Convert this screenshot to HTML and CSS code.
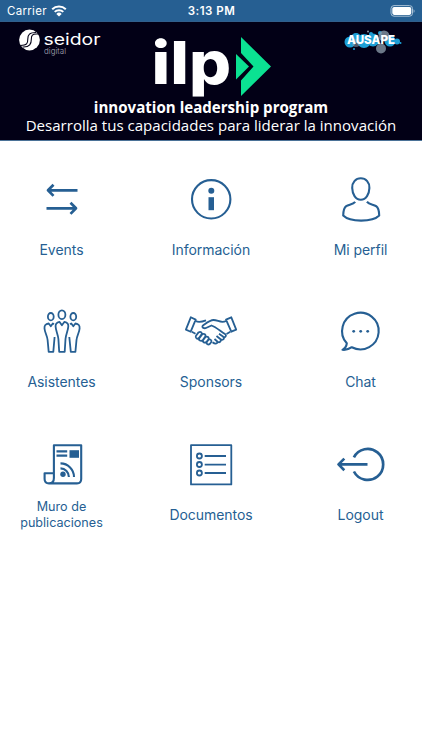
FILE: index.html
```
<!DOCTYPE html>
<html lang="es">
<head>
    <meta charset="UTF-8">
    <meta name="viewport" content="width=device-width, initial-scale=1.0">
    <title>Innovation Leadership Program</title>
    <link rel="stylesheet" href="styles.css">
</head>
<body>
    <div class="status-bar">
        <div class="carrier">
            <span>Carrier</span>
            <svg class="wifi" width="16" height="12" viewBox="0 0 16 12">
                <path d="M1.2 4.2a9.8 9.8 0 0 1 13.6 0M3.7 6.9a6.2 6.2 0 0 1 8.6 0" fill="none" stroke="#fff" stroke-width="2"/>
                <path d="M8 11.6L5.3 8.9a3.8 3.8 0 0 1 5.4 0z" fill="#fff"/>
            </svg>
        </div>
        <div class="time">3:13 PM</div>
        <div class="battery">
            <svg width="26" height="12" viewBox="0 0 26 12">
                <rect x="1" y=".6" width="21.5" height="10.6" rx="3" fill="none" stroke="#a9c1d6" stroke-width="1"/>
                <rect x="2.3" y="1.9" width="19" height="8" rx="1.8" fill="#fff"/>
                <path d="M23.6 4.2c1.3.4 1.3 3.2 0 3.6z" fill="#a9c1d6"/>
            </svg>
        </div>
    </div>

    <header class="banner">
        <div class="logos">
            <svg class="seidor" width="84" height="30" viewBox="0 0 84 30">
                <circle cx="10.5" cy="10" r="10.4" fill="#fff"/>
                <path d="M19 4C13 3.500 12.300 5.500 12.300 9.500S11 17.500 3.500 17M17 2.500C10.500 2.500 8.800 4.500 8.800 9S8 15.500 1.500 15.500" fill="none" stroke="#020016" stroke-width="1.1"/>
                <text x="24.500" y="14.500" font-size="16" textLength="57" lengthAdjust="spacingAndGlyphs">seidor</text>
                <text class="thin" x="25" y="24" font-size="8" textLength="22" lengthAdjust="spacingAndGlyphs">digital</text>
            </svg>
            <svg class="ilp" width="118" height="66" viewBox="0 0 118 66">
                <text x="-.5" y="47.500" font-size="59" textLength="79.500" lengthAdjust="spacingAndGlyphs">ilp</text>
                <path d="M89 1L119 30.500L89 60V44.500L101.500 30.500L89 17z" fill="#0be292"/>
                <path d="M84 18L97 30.500L84 43.500z" fill="#0be292"/>
            </svg>
            <svg class="ausape" width="58" height="27" viewBox="0 0 58 27">
                <g fill="#1d9fd6">
                    <circle cx="6" cy="12" r="5.500"/>
                    <circle cx="12" cy="8" r="5"/>
                    <circle cx="20" cy="11" r="7"/>
                    <circle cx="29" cy="10" r="6.500"/>
                    <circle cx="46" cy="11" r="5.500"/>
                    <circle cx="53" cy="11.500" r="3"/>
                    <circle cx="27" cy="4" r="2"/>
                    <circle cx="36" cy="3" r="2"/>
                    <circle cx="10" cy="19" r="1"/>
                    <circle cx="56.500" cy="13" r="1"/>
                </g>
                <g fill="#8796a5">
                    <circle cx="40" cy="6" r="5.500" opacity=".8"/>
                    <circle cx="37" cy="18.500" r="5" opacity=".8"/>
                    <circle cx="24" cy="1.500" r="1"/>
                    <circle cx="12" cy="13" r="4" opacity=".6"/>
                </g>
                <text x="3" y="14" font-size="12" textLength="48" lengthAdjust="spacingAndGlyphs">AUSAPE</text>
            </svg>
        </div>
        <h1>innovation leadership program</h1>
        <p>Desarrolla tus capacidades para liderar la innovación</p>
    </header>

    <main class="menu">
        <a class="item">
            <svg class="icon bold" viewBox="0 0 56 52">
                <path d="M43.500 17.300H14M19.500 11.700L14 17.300L19.500 22.900M12.500 35.300H42M36.500 29.700L42 35.300L36.500 40.900"/>
            </svg>
            <span>Events</span>
        </a>
        <a class="item">
            <svg class="icon" viewBox="0 0 56 52">
                <circle cx="28.200" cy="26.300" r="19.200"/>
                <circle class="solid" cx="28.300" cy="17.700" r="3"/>
                <path class="solid" d="M25.500 24.200h5.500v13h-5.500z"/>
            </svg>
            <span>Información</span>
        </a>
        <a class="item">
            <svg class="icon" viewBox="0.500 0 56 52">
                <path d="M28.300 5.300C33.500 5.300 37.200 9.500 36.900 15C36.700 21 33.700 26.800 28.300 26.800S19.900 21 19.700 15C19.400 9.500 23.100 5.300 28.300 5.300z"/>
                <path d="M22.700 28.800C20.500 31.500 16.500 31.500 13.700 33.200C11.500 34.800 10.800 38 10.700 42.500C14 45.800 21 47.600 28.600 47.600S43.500 45.800 46.700 42.500C46.600 38 46 34.800 43.700 33.200C40.500 31.500 36.700 31.500 34.400 28.800"/>
            </svg>
            <span>Mi perfil</span>
        </a>
        <a class="item">
            <svg class="icon fine" viewBox="0 0 56 52">
                <ellipse cx="27.900" cy="9.700" rx="3.500" ry="4.400"/>
                <ellipse cx="16.800" cy="11.700" rx="2.900" ry="3.700"/>
                <ellipse cx="39.300" cy="11.700" rx="2.900" ry="3.700"/>
                <path d="M25.400 16.800L27.900 20.300L30.500 16.800C33 17.300 34.600 18.500 34.300 21.500C34 26 31.800 29.500 31.500 34L30.700 46.800H25.200L24.400 34C24 29.500 21.800 26 21.600 21.500C21.400 18.500 23 17.300 25.400 16.800z"/>
                <path d="M20 19.300L18.800 18.500L16.800 21.200L14.700 18.500C11.500 19 10.200 20 10.500 23.500C10.800 27.500 13.300 31 13.600 35L14.700 46.800H19.300L20.600 32"/>
                <path d="M36 19.300L37.300 18.500L39.300 21.200L41.400 18.500C44.600 19 45.900 20 45.600 23.500C45.300 27.500 42.800 31 42.500 35L41.400 46.800H36.800L35.300 32"/>
            </svg>
            <span>Asistentes</span>
        </a>
        <a class="item">
            <svg class="icon fine" viewBox="0 0 56 52">
                <path d="M7.800 12.300L12.700 14.600L7.700 26.700L2.900 24.600zM48.300 12.300L53.200 24.600L48.300 26.700L43 14.600z"/>
                <path d="M12.700 16C16 17.800 19 16.800 23 15.300M43 16C38 18.500 35 15 30.500 15C27 15 25.500 16.500 19.700 20.800C18.500 22.500 21 24 23.500 22.800L28.500 20.500C33 22 37 25.800 42 29C44 30.500 42.500 33 40.300 31.700L36 28.800"/>
                <path d="M40.300 31.700C42 34 39.500 35.800 37.600 34.300L33.500 31M37.600 34.300C38.500 36.500 36.500 38 34.600 36.700L31.500 34M34.600 36.700C34.300 39 32 39.300 29.500 37.300M8.800 26.700L12.500 28.800M47.300 26.700L43.500 29"/>
                <path d="M13 30.800L15.500 27.400C17.500 26 19.500 27.500 18.600 29.400L16 33C14.300 34.700 11.800 33 13 30.800zM16.300 33.300L19.300 29.300C21.300 28.200 23.200 29.700 22.300 31.600L19.700 35.200C17.800 36.700 15.300 35.300 16.300 33.300zM20 35.300L22.500 32C24.500 30.900 26.300 32.400 25.500 34.200L23.500 37C21.700 38.500 19.300 37.200 20 35.300zM23.800 37L25.500 34.700C27.300 33.800 29 35.200 28.300 37L26.800 39C25.200 40.200 23 39 23.800 37z"/>
            </svg>
            <span>Sponsors</span>
        </a>
        <a class="item">
            <svg class="icon" viewBox="0.500 0 56 52">
                <path d="M14.300 38.300A18.300 18.300 0 1 1 19.300 42.200C16.500 44.200 13.500 45.200 10 44.800C12.500 43.300 14 41 14.300 38.300z"/>
                <g class="solid">
                    <circle cx="21.200" cy="26.300" r="1.400"/>
                    <circle cx="28.200" cy="26.300" r="1.400"/>
                    <circle cx="35.200" cy="26.300" r="1.400"/>
                </g>
            </svg>
            <span>Chat</span>
        </a>
        <a class="item">
            <svg class="icon" viewBox="0 0 56 52">
                <path d="M19.900 35V7.300H47.200V41C47.200 44 45.500 45.400 43 45.400H15C12 45.400 10.600 43.500 10.600 41V35.200H19.900V40C19.900 43.500 18 45.400 15 45.400"/>
                <path d="M22.500 13.400H33.200M22.500 17.600H33.200"/>
                <path class="solid" d="M35.500 12.200h9.500v7.600h-9.500z"/>
                <circle class="solid" cx="29" cy="36.300" r="2.700"/>
                <path d="M26.500 30.400A8.500 8.500 0 0 1 34.900 39M26.500 25.400A13.500 13.500 0 0 1 40 39"/>
            </svg>
            <span class="small">Muro de publicaciones</span>
        </a>
        <a class="item">
            <svg class="icon fine" viewBox="0 0 56 52">
                <path d="M8 7.200H48.300V46.400H8z"/>
                <path d="M21.700 18H43M21.700 26.700H43M21.700 35H43"/>
                <circle cx="16.400" cy="18" r="2.500"/>
                <circle cx="16.400" cy="26.500" r="2.500"/>
                <circle cx="16.400" cy="35" r="2.500"/>
            </svg>
            <span>Documentos</span>
        </a>
        <a class="item">
            <svg class="icon bold" viewBox="1 0 56 52">
                <path d="M21.900 19.300A15.500 15.500 0 1 1 21.900 33.500M35.500 26.400H6.500M12.300 20.600L6.500 26.400L12.300 32.200"/>
            </svg>
            <span>Logout</span>
        </a>
    </main>
</body>
</html>
```
FILE: styles.css
```
* {
    margin: 0;
    padding: 0;
    box-sizing: border-box;
}

body {
    font-family: Inter, "Liberation Sans", sans-serif;
    background: #fff;
    color: #265f93;
    min-height: 100vh;
    overflow: hidden;
}

.status-bar {
    display: grid;
    grid-template-columns: 1fr auto 1fr;
    align-items: center;
    height: 21px;
    padding: 1px 6px 0 7px;
    background: #265f92;
    color: #fff;
    font-size: 11.5px;
    letter-spacing: 0.3px;
}

.carrier {
    display: flex;
    align-items: center;
    gap: 4px;
}

.time {
    font-weight: 600;
    letter-spacing: 0.5px;
}

.battery {
    display: flex;
    justify-content: flex-end;
}

.banner {
    height: 120px;
    padding-top: 8px;
    background: #020016;
    border-top: 1px solid #315f8c;
    border-bottom: 1px solid #4b7297;
    color: #fff;
    font-family: "Open Sans", sans-serif;
    text-align: center;
    white-space: nowrap;
}

.logos {
    display: grid;
    grid-template-columns: 1fr 118px 1fr;
    height: 68px;
    padding: 0 20px 0 19px;
}

.logos svg {
    overflow: visible;
}

.logos text {
    fill: #fff;
    font-family: Inter, sans-serif;
    font-weight: 800;
}

.logos .seidor text {
    font-weight: 400;
}

.logos .seidor .thin {
    fill: #a9a8b6;
    font-weight: 300;
}

.ilp {
    margin-top: 6px;
}

.ausape {
    justify-self: end;
}

.banner h1 {
    font-size: 15.1px;
    font-weight: 700;
    line-height: 18px;
}

.banner p {
    font-size: 15.05px;
    line-height: 18px;
}

.menu {
    display: grid;
    grid-template-columns: repeat(3, 123px);
    grid-auto-rows: 132.3px;
    justify-content: space-between;
}

.item {
    display: flex;
    flex-direction: column;
    align-items: center;
    padding-top: 32px;
}

.icon {
    width: 56px;
    height: 52px;
    fill: none;
    stroke: #265f93;
    stroke-width: 2.1;
    stroke-linejoin: round;
}

.icon.fine {
    stroke-width: 1.8;
}

.icon.bold {
    stroke-width: 2.7;
}

.solid {
    fill: #265f93;
    stroke: none;
}

.item span {
    display: flex;
    align-items: center;
    height: 34px;
    margin-top: 7.6px;
    font-size: 14px;
    letter-spacing: -0.05px;
    text-align: center;
}

.item .small {
    width: 100px;
    margin-top: 8px;
    font-size: 12.6px;
    line-height: 15.5px;
    letter-spacing: 0;
}
```
